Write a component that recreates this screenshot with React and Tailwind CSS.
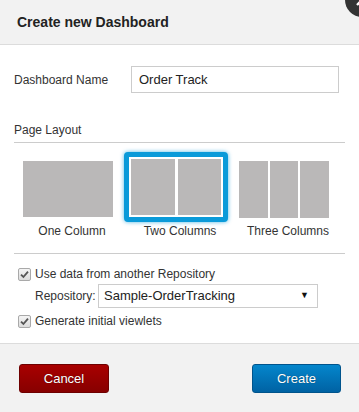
import React from 'react'

function Check() {
  return (
    <span className="flex h-[13px] w-[13px] shrink-0 items-center justify-center rounded-[2px] border border-[#a9a9a9] bg-[linear-gradient(#f4f4f4,#dcdcdc)]">
      <svg width="9" height="9" viewBox="0 0 9 9" aria-hidden="true">
        <path d="M1 4.6 L3.4 7 L8 1.6" fill="none" stroke="#555" strokeWidth="1.8" />
      </svg>
    </span>
  )
}

function Block({ className = '' }) {
  return <div className={`bg-[#bab8b8] ${className}`} />
}

export default function App() {
  return (
    <div className="relative flex h-[412px] w-[359px] flex-col overflow-hidden bg-white font-['Liberation_Sans',Arial,sans-serif] text-[#333]">
      {/* header */}
      <div className="flex h-[45px] shrink-0 items-center border-b border-[#dcdcdc] bg-[#f2f2f2] px-[17px]">
        <h2 className="text-[14px] font-bold text-[#222]">Create new Dashboard</h2>
      </div>
      <button
        type="button"
        aria-label="Close"
        className="absolute left-[345px] top-[-17px] flex h-[34px] w-[34px] items-center justify-center rounded-full bg-[#333]"
      >
        <svg width="14" height="14" viewBox="0 0 14 14" aria-hidden="true">
          <path d="M2 2 L12 12 M12 2 L2 12" stroke="#fff" strokeWidth="2.4" />
        </svg>
      </button>

      {/* body */}
      <div className="flex flex-1 flex-col px-[14px]">
        <div className="mt-[21px] flex items-center">
          <label className="w-[117px] text-[12px]">Dashboard Name</label>
          <div className="flex h-[27px] w-[208px] items-center border border-[#ccc] px-[7px] text-[13px] text-[#222]">
            Order Track
          </div>
        </div>

        <div className="mt-[30px] border-b border-[#ccc] pb-[5px] text-[12px] leading-[14px]">Page Layout</div>

        <div className="mt-[9px] flex">
          <div className="flex w-[108px] flex-col items-center">
            <Block className="mt-[9px] h-[56px] w-[90px]" />
            <div className="mt-[7px] pl-2 text-[12px] leading-[14px]">One Column</div>
          </div>
          <div className="flex w-[108px] flex-col items-center">
            <div className="flex h-[70px] w-[104px] gap-[3px] rounded-[4px] border-[5px] border-[#0a9ad9] bg-white p-[2px] shadow-[0_0_4px_rgba(10,154,217,0.7)]">
              <Block className="flex-1" />
              <Block className="flex-1" />
            </div>
            <div className="mt-[2px] pl-2 text-[12px] leading-[14px]">Two Columns</div>
          </div>
          <div className="flex w-[108px] flex-col items-center">
            <div className="mt-[9px] flex h-[57px] w-[90px] gap-[2px]">
              <Block className="flex-1" />
              <Block className="flex-1" />
              <Block className="flex-1" />
            </div>
            <div className="mt-[6px] pl-2 text-[12px] leading-[14px]">Three Columns</div>
          </div>
        </div>

        <div className="mt-[15px] border-t border-[#ccc]" />

        <div className="mt-[13px] flex items-center gap-[4px] pl-[4px] text-[12px] leading-[14px]">
          <Check />
          <span>Use data from another Repository</span>
        </div>
        <div className="mt-[3px] flex items-center pl-[21px] text-[12px]">
          <span className="w-[63px]">Repository:</span>
          <div className="flex h-[24px] w-[220px] items-center justify-between border border-[#ccc] pl-[5px] pr-[8px] text-[13px] text-[#222]">
            <span>Sample-OrderTracking</span>
            <span className="text-[9px] text-[#111]">▼</span>
          </div>
        </div>
        <div className="mt-[6px] flex items-center gap-[4px] pl-[4px] text-[12px] leading-[14px]">
          <Check />
          <span>Generate initial viewlets</span>
        </div>
      </div>

      {/* footer */}
      <div className="flex h-[69px] shrink-0 items-start justify-between border-t border-[#dcdcdc] bg-[#f2f2f2] pl-[19px] pr-[18px] pt-[20px]">
        <button
          type="button"
          className="h-[29px] w-[90px] rounded-[3px] border border-[#6e0000] bg-[linear-gradient(#a80000,#870000)] text-[13px] text-white [text-shadow:0_0_1px_rgba(0,0,0,0.5)]"
        >
          Cancel
        </button>
        <button
          type="button"
          className="h-[29px] w-[89px] rounded-[3px] border border-[#00548c] bg-[linear-gradient(#0486cc,#0062a3)] text-[13px] text-white [text-shadow:0_0_1px_rgba(0,0,0,0.5)]"
        >
          Create
        </button>
      </div>
    </div>
  )
}
